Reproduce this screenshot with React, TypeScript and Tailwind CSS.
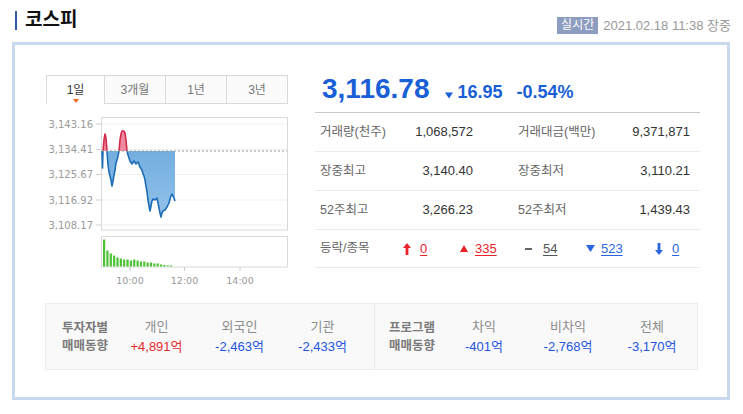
import React from "react";

const PTS: [number, number][] = [
  [102, 151], [102.5, 168], [103, 151], [104, 140], [105, 134], [106, 138], [107, 151],
  [108, 165], [109, 172], [110, 176], [111, 180], [112, 186], [113, 181], [114, 175],
  [115, 170], [116, 163], [117, 160], [118, 156], [119, 151], [120, 140], [121, 134],
  [122, 131], [124, 131], [125, 133], [126, 140], [127, 151], [128, 155], [129, 158],
  [130, 161], [132, 164], [134, 161], [136, 164], [138, 162], [140, 167], [142, 170],
  [143, 174], [144, 176], [145, 180], [146, 186], [147, 192], [148, 200], [149, 206],
  [150, 211], [151, 206], [152, 201], [153, 199], [155, 200], [157, 198], [158, 203],
  [159, 208], [160, 213], [161, 217], [162, 213], [163, 211], [165, 210], [167, 207],
  [169, 203], [170, 199], [171, 196], [172, 194], [173, 196], [174, 198], [175, 201],
];

const BARS = [27, 16, 13, 11, 9, 8, 7, 7, 6, 7, 6, 5, 5, 4, 4, 3, 3, 2, 1.5, 1, 1];

function Chart() {
  const local = PTS.map(([x, y]) => [x - 46, y - 104]);
  const line = local.map((p, i) => (i ? "L" : "M") + p[0] + " " + p[1]).join(" ");
  const base = 47;
  const area = line + ` L${175 - 46} ${base} L${102 - 46} ${base} Z`;
  const labels: [string, number][] = [
    ["3,143.16", 20],
    ["3,134.41", 45.5],
    ["3,125.67", 70.5],
    ["3,116.92", 96],
    ["3,108.17", 121],
  ];
  const times: [string, number][] = [
    ["10:00", 84],
    ["12:00", 138.5],
    ["14:00", 194],
  ];
  return (
    <svg width="242" height="185" viewBox="0 0 242 185" className="block">
      <defs>
        <linearGradient id="bf" x1="0" y1="0" x2="0" y2="1">
          <stop offset="0" stopColor="#6aa8dd" />
          <stop offset="1" stopColor="#92c2ea" />
        </linearGradient>
        <clipPath id="up">
          <rect x="0" y="0" width="242" height={base} />
        </clipPath>
        <clipPath id="dn">
          <rect x="0" y={base} width="242" height="100" />
        </clipPath>
      </defs>
      {labels.map(([t, y]) => (
        <g key={t}>
          <line x1="55.5" x2="241.5" y1={y} y2={y} stroke="#f0f0f0" strokeWidth="1" />
          <line x1="50" x2="55" y1={y} y2={y} stroke="#cfcfcf" strokeWidth="1" />
          <text
            x="47"
            y={y}
            dy="0.35em"
            textAnchor="end"
            fontSize="10"
            fill="#9a9a9a"
            fontFamily="'DejaVu Sans', sans-serif"
          >
            {t}
          </text>
        </g>
      ))}
      <rect x="55.5" y="13.5" width="186" height="112.5" fill="none" stroke="#d9d9d9" />
      <g clipPath="url(#dn)">
        <path d={area} fill="url(#bf)" />
        <path d={line} fill="none" stroke="#1c6db5" strokeWidth="1.6" strokeLinejoin="round" />
      </g>
      <g clipPath="url(#up)">
        <path d={area} fill="#ef8aa0" />
        <path d={line} fill="none" stroke="#d42a4e" strokeWidth="1.6" strokeLinejoin="round" />
      </g>
      <line x1="56" x2="241" y1={base} y2={base} stroke="#9a9a9a" strokeDasharray="2 2" strokeWidth="1" />
      <rect x="55.5" y="132.5" width="186" height="30.5" fill="none" stroke="#d9d9d9" />
      {BARS.map((h, i) => (
        <rect key={i} x={57 + i * 3.35} y={162.5 - h} width="2.2" height={h} fill="#4cc234" />
      ))}
      {times.map(([t, x]) => (
        <g key={t}>
          <line x1={x} x2={x} y1="163" y2="167" stroke="#cccccc" />
          <text
            x={x}
            y="179.5"
            textAnchor="middle"
            fontSize="9.5"
            fill="#9a9a9a"
            fontFamily="'DejaVu Sans', sans-serif"
          >
            {t}
          </text>
        </g>
      ))}
    </svg>
  );
}

function UpArrow({ color }: { color: string }) {
  return (
    <svg width="8" height="12" viewBox="0 0 8 12" className="block">
      <path d="M4 0 L8 5 L5.4 5 L5.4 12 L2.6 12 L2.6 5 L0 5 Z" fill={color} />
    </svg>
  );
}
function DownArrow({ color }: { color: string }) {
  return (
    <svg width="8" height="12" viewBox="0 0 8 12" className="block">
      <path d="M4 12 L8 7 L5.4 7 L5.4 0 L2.6 0 L2.6 7 L0 7 Z" fill={color} />
    </svg>
  );
}
function TriUp({ color }: { color: string }) {
  return (
    <svg width="8" height="7" viewBox="0 0 8 7" className="block">
      <path d="M4 0 L8 7 L0 7 Z" fill={color} />
    </svg>
  );
}
function TriDown({ color, w = 9, h = 7 }: { color: string; w?: number; h?: number }) {
  return (
    <svg width={w} height={h} viewBox="0 0 9 7" className="block">
      <path d="M0 0 L9 0 L4.5 7 Z" fill={color} />
    </svg>
  );
}

function Row({ a, av, b, bv }: { a: string; av: string; b: string; bv: string }) {
  return (
    <div className="h-[39px] border-b border-[#ebebeb] flex items-center pl-[5px] pr-[10px] text-[13px]">
      <div className="w-[80px] text-[12.5px] text-[#666]">{a}</div>
      <div className="w-[73px] text-right text-[#333]">{av}</div>
      <div className="ml-[45px] w-[90px] text-[12.5px] text-[#666]">{b}</div>
      <div className="flex-1 text-right text-[#333]">{bv}</div>
    </div>
  );
}

function InvCol({ label, value, color }: { label: string; value: string; color: string }) {
  return (
    <div className="w-full flex flex-col items-center leading-[20px]">
      <div className="text-[13px] text-[#8c8c8c]">{label}</div>
      <div className={"text-[13px] " + color}>{value}</div>
    </div>
  );
}

export default function App() {
  return (
    <div className="w-[743px] h-[414px] bg-white font-['Liberation_Sans','Noto_Sans_CJK_KR',sans-serif] overflow-hidden">
      <div className="h-[42px] flex justify-between">
        <div className="flex items-center pt-[10px] pl-[15px] h-[30px]">
          <div className="w-[2px] h-[19px] bg-[#3358a5]" />
          <div className="ml-[8px] text-[19px] font-bold text-[#111] leading-[20px]">코스피</div>
        </div>
        <div className="flex items-center pt-[16px] pr-[12px] h-[34px]">
          <div className="bg-[#8d9dbf] text-white text-[12px] leading-[17px] h-[17px] px-[4px]">실시간</div>
          <div className="ml-[5px] text-[13px] text-[#999] leading-[17px]">2021.02.18 11:38 장중</div>
        </div>
      </div>

      <div className="ml-[12px] w-[718px] h-[358px] border-[3px] border-[#c9d9ee] pt-[30px] pl-[30px]">
        <div className="flex">
          <div className="w-[243px] ml-[1px]">
            <div className="flex h-[29px] text-[12px]">
              <div className="relative w-[59px] border-t border-l border-r border-[#d9d9d9] bg-white flex items-center justify-center text-[#333]">
                1일
                <div className="absolute bottom-[1px] left-[26px] w-0 h-0 border-l-[3.5px] border-r-[3.5px] border-t-[4px] border-l-transparent border-r-transparent border-t-[#f26522]" />
              </div>
              <div className="w-[61px] border-t border-r border-b border-[#d9d9d9] bg-[#fbfbfb] flex items-center justify-center text-[#777]">3개월</div>
              <div className="w-[61px] border-t border-r border-b border-[#d9d9d9] bg-[#fbfbfb] flex items-center justify-center text-[#777]">1년</div>
              <div className="w-[61px] border-t border-r border-b border-[#d9d9d9] bg-[#fbfbfb] flex items-center justify-center text-[#777]">3년</div>
            </div>
            <Chart />
          </div>

          <div className="ml-[26px] w-[385px]">
            <div className="h-[38px] border-b border-[#c9c9c9] flex items-baseline pl-[7px]">
              <div className="text-[28px] leading-[28px] font-bold text-[#1a5fd6]">3,116.78</div>
              <div className="ml-[16px] self-center mt-[4px]">
                <TriDown color="#1a5fd6" w={8} h={7} />
              </div>
              <div className="ml-[4px] text-[18px] font-bold text-[#1a5fd6]">16.95</div>
              <div className="ml-[14px] text-[18px] font-bold text-[#1a5fd6]">-0.54%</div>
            </div>
            <Row a="거래량(천주)" av="1,068,572" b="거래대금(백만)" bv="9,371,871" />
            <Row a="장중최고" av="3,140.40" b="장중최저" bv="3,110.21" />
            <Row a="52주최고" av="3,266.23" b="52주최저" bv="1,439.43" />
            <div className="h-[38px] border-b border-[#ebebeb] flex items-center pl-[5px] text-[13px]">
              <div className="w-[83px] text-[12.5px] text-[#666]">등락/종목</div>
              <div className="w-[57px] flex items-center">
                <UpArrow color="#e8232a" />
                <span className="ml-[9px] underline underline-offset-2 text-[#e8232a]">0</span>
              </div>
              <div className="w-[65px] flex items-center">
                <TriUp color="#e8232a" />
                <span className="ml-[7px] underline underline-offset-2 text-[#e8232a]">335</span>
              </div>
              <div className="w-[61px] flex items-center">
                <div className="w-[7px] h-[2px] bg-[#666]" />
                <span className="ml-[11px] underline underline-offset-2 text-[#555]">54</span>
              </div>
              <div className="w-[69px] flex items-center">
                <TriDown color="#2a66e0" />
                <span className="ml-[6px] underline underline-offset-2 text-[#2a66e0]">523</span>
              </div>
              <div className="flex items-center">
                <DownArrow color="#2a66e0" />
                <span className="ml-[9px] underline underline-offset-2 text-[#2a66e0]">0</span>
              </div>
            </div>
          </div>
        </div>

        <div className="mt-[14px] w-[653px] h-[67px] bg-[#f9f9f9] border border-[#ececec] flex">
          <div className="w-[328px] flex items-center pl-[16px]">
            <div className="w-[53px] text-[12.5px] font-bold text-[#7a7a7a] leading-[18px]">
              투자자별
              <br />
              매매동향
            </div>
            <div className="w-[83px]">
              <InvCol label="개인" value="+4,891억" color="text-[#e62b2b]" />
            </div>
            <div className="w-[83px]">
              <InvCol label="외국인" value="-2,463억" color="text-[#2255e0]" />
            </div>
            <div className="w-[83px]">
              <InvCol label="기관" value="-2,433억" color="text-[#2255e0]" />
            </div>
          </div>
          <div className="flex-1 border-l border-[#e6e6e6] flex items-center pl-[14px]">
            <div className="w-[53px] text-[12.5px] font-bold text-[#7a7a7a] leading-[18px]">
              프로그램
              <br />
              매매동향
            </div>
            <div className="w-[84px]">
              <InvCol label="차익" value="-401억" color="text-[#2255e0]" />
            </div>
            <div className="w-[84px]">
              <InvCol label="비차익" value="-2,768억" color="text-[#2255e0]" />
            </div>
            <div className="w-[84px]">
              <InvCol label="전체" value="-3,170억" color="text-[#2255e0]" />
            </div>
          </div>
        </div>
      </div>
    </div>
  );
}
